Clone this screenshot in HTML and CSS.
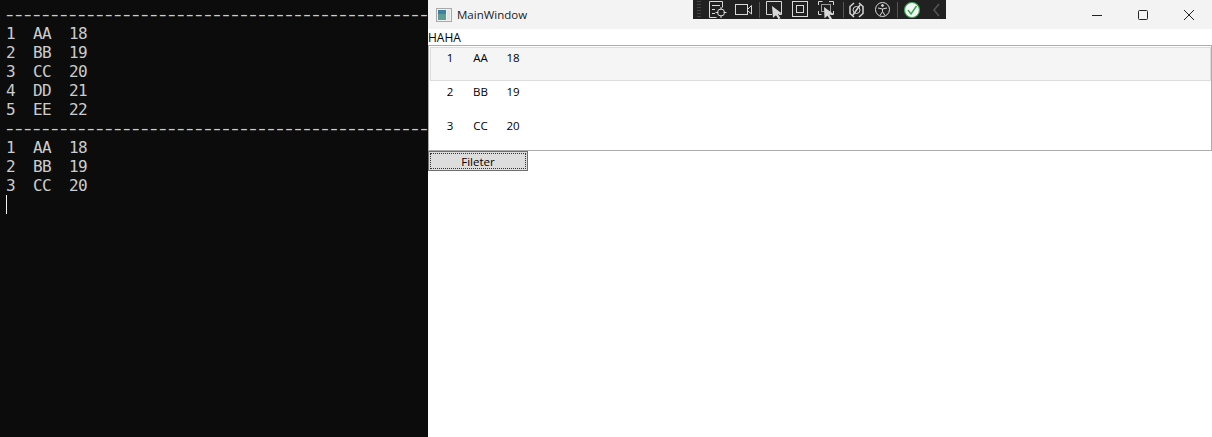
FILE: index.html
```html
<!DOCTYPE html>
<html lang="en">
<head>
<meta charset="utf-8">
<title>MainWindow</title>
<link rel="stylesheet" href="styles.css">
</head>
<body>
<div class="desktop">
  <section class="terminal">
    <div class="line rule">-----------------------------------------------</div>
    <div class="line">1  AA  18</div>
    <div class="line">2  BB  19</div>
    <div class="line">3  CC  20</div>
    <div class="line">4  DD  21</div>
    <div class="line">5  EE  22</div>
    <div class="line rule">-----------------------------------------------</div>
    <div class="line">1  AA  18</div>
    <div class="line">2  BB  19</div>
    <div class="line">3  CC  20</div>
    <div class="line"><span class="cursor"></span></div>
  </section>
  <section class="window">
    <header class="titlebar">
      <svg class="app-icon" width="16" height="16" viewBox="0 0 16 16">
        <rect x="0.500" y="1.500" width="15" height="13" fill="#f0f0f0" stroke="#a9a9a9"/>
        <rect x="2" y="3" width="8" height="10" fill="#5f9c96"/>
        <rect x="2" y="3" width="8" height="4" fill="#3f7f9f"/>
        <rect x="11" y="3" width="3" height="10" fill="#dfe6e4"/>
      </svg>
      <span class="title">MainWindow</span>
      <div class="caption">
        <button class="cap-btn" aria-label="Minimize"><svg width="10" height="10" viewBox="0 0 10 10"><path d="M0 5.500h10" stroke="#222" fill="none"/></svg></button>
        <button class="cap-btn" aria-label="Maximize"><svg width="10" height="10" viewBox="0 0 10 10"><rect x="0.500" y="0.500" width="9" height="9" rx="1" stroke="#222" fill="none"/></svg></button>
        <button class="cap-btn" aria-label="Close"><svg width="10" height="10" viewBox="0 0 10 10"><path d="M0 0l10 10M10 0L0 10" stroke="#222" fill="none"/></svg></button>
      </div>
    </header>
    <div class="label">HAHA</div>
    <div class="listbox">
      <div class="row selected"><span class="c1">1</span><span class="c2">AA</span><span class="c3">18</span></div>
      <div class="row"><span class="c1">2</span><span class="c2">BB</span><span class="c3">19</span></div>
      <div class="row"><span class="c1">3</span><span class="c2">CC</span><span class="c3">20</span></div>
    </div>
    <button class="filter"><span class="filter-inner">Fileter</span></button>
  </section>
  <nav class="debugbar">
    <svg class="dbg" width="253" height="20" viewBox="0 0 253 20" fill="none" stroke="#d8d8d8">
      <path d="M5 1v18M7 1v18" stroke="#666" stroke-dasharray="1 2"/>
      <path d="M16.500 17.500V1.500h13v6M16.500 17.500h7M19 5.500h8M19 9.500h3M19 13.500h3"/>
      <circle cx="28" cy="12.500" r="3.500"/>
      <path d="M28 7v3M28 15v3M22.500 12.500h3M30.500 12.500h3"/>
      <rect x="42.500" y="4.500" width="12" height="10"/>
      <path d="M55 9l3.500-3.500V14L55 11"/>
      <path d="M66.500 2v16" stroke="#555"/>
      <path d="M79 14.500h-5.500V1.500h15v13H86"/>
      <path d="M79 6l10 7.500-4 .7 2.500 4-2 1-2.500-4-3 2.500z" fill="#d8d8d8" stroke="none"/>
      <rect x="99.500" y="1.500" width="15" height="15"/>
      <rect x="103.500" y="5.500" width="7" height="7"/>
      <path d="M125.500 5V1.500h4M136 1.500h4.500V5M125.500 11v3.500h3M140.500 11v3.500h-3"/>
      <rect x="128.500" y="4.500" width="9" height="7" stroke="#999"/>
      <path d="M131 7l9.500 7-4 .7 2.500 4-2 1-2.500-4-3 2.500z" fill="#d8d8d8" stroke="none"/>
      <path d="M150.500 2v16" stroke="#555"/>
      <path d="M161 3l-4 3.500v7l4 3.500M166 3l4 3.500v7l-4 3.500M160 15l7-10" stroke-width="1.500"/>
      <circle cx="163.500" cy="10" r="3.500"/>
      <circle cx="189.500" cy="9.500" r="7"/>
      <circle cx="189.500" cy="5.500" r="1" fill="#d8d8d8"/>
      <path d="M185 8l4.500 1 4.500-1M189.500 9v2.500l-2.500 4M189.500 11.500l2.500 4"/>
      <path d="M204.500 2v16" stroke="#555"/>
      <circle cx="219" cy="10" r="7.500" fill="#f4f8f4" stroke="#3aa655" stroke-width="1.200"/>
      <path d="M215 10l3 4 5.500-8" stroke="#3aa655" stroke-width="1.500"/>
      <path d="M246 4l-5 6 5 6" stroke="#555" stroke-width="1.500"/>
    </svg>
  </nav>
</div>
</body>
</html>
```

FILE: styles.css
```css
* { box-sizing: border-box; }
html, body { margin: 0; padding: 0; width: 1212px; height: 437px; overflow: hidden; background: #fff; }

.desktop { position: relative; display: flex; width: 1212px; height: 437px; }

.terminal {
  flex: 0 0 428px;
  height: 437px;
  overflow: hidden;
  padding: 5px 0 0 6px;
  background: #0c0c0c;
  color: #cccccc;
  font-family: "DejaVu Sans Mono", monospace;
  font-size: 16px;
  letter-spacing: -0.63px;
}
.line { height: 19px; line-height: 19px; white-space: pre; }
.rule {
  margin-left: -3px;
  letter-spacing: -3.2px;
  transform: scaleX(1.4);
  transform-origin: left center;
}
.cursor { display: block; width: 1px; height: 19px; background: #f2f2f2; }

.window {
  flex: 1;
  min-width: 0;
  background: #fff;
  font-family: "Open Sans", "Liberation Sans", sans-serif;
  font-size: 11.5px;
  color: #000;
}
.titlebar {
  display: flex;
  align-items: center;
  height: 29px;
  padding-left: 8px;
  background: #f3f3f3;
}
.app-icon { flex: none; margin-right: 5px; }
.title { color: #1a1a1a; }
.caption { display: flex; margin-left: auto; }
.cap-btn {
  display: flex;
  align-items: center;
  justify-content: center;
  width: 46px;
  height: 29px;
  border: 0;
  padding: 0;
  background: transparent;
}

.label { height: 16px; line-height: 17px; font-size: 12px; }

.listbox {
  height: 106px;
  border: 1px solid #acacac;
  padding: 1px 0 0 1px;
}
.row {
  display: flex;
  height: 34px;
  padding-top: 2px;
  line-height: 16px;
  border: 1px solid transparent;
}
.row.selected { background: #f5f5f5; border-color: #dcdcdc; }
.c1 { width: 34px; text-align: center; padding-left: 4px; }
.c2 { width: 23px; text-align: center; margin-left: 4px; }
.c3 { width: 30px; text-align: center; margin-left: 6px; }

.filter {
  display: block;
  width: 100px;
  height: 20px;
  padding: 1px;
  border: 1px solid #707070;
  background: #dddddd;
  font: inherit;
  color: #000;
}
.filter-inner {
  display: block;
  height: 16px;
  line-height: 15px;
  border: 1px dotted #333;
}

.debugbar {
  position: absolute;
  left: 693px;
  top: 0;
  width: 253px;
  height: 19px;
  background: #212121;
  overflow: hidden;
}
.dbg { display: block; }
```
